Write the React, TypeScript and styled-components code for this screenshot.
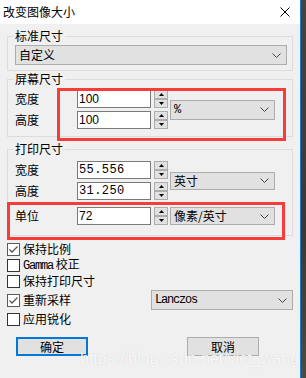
import React from "react";
import styled, { createGlobalStyle } from "styled-components";

const GlobalStyle = createGlobalStyle`
  html, body {
    margin: 0;
    padding: 0;
    width: 306px;
    height: 378px;
    overflow: hidden;
  }
  body {
    font-family: "Noto Sans CJK SC", "Liberation Sans", sans-serif;
    font-size: 12px;
    color: #000;
  }
  * { box-sizing: border-box; }
`;

const Screen = styled.div`
  display: flex;
  width: 306px;
  height: 378px;
  background: linear-gradient(180deg, #4b423e 0%, #3d3733 60%, #4e4a3c 100%);
`;

const Window = styled.div`
  position: relative;
  width: 301px;
  height: 378px;
  border-right: 1px solid #1a78cf;
  background: #f0f0f0;
  display: flex;
  flex-direction: column;
`;

const TitleBar = styled.div`
  height: 24px;
  flex: none;
  background: #fff;
  display: flex;
  align-items: center;
  justify-content: space-between;
  padding: 0 10px 0 3px;
  line-height: 14px;
`;

const Body = styled.div`
  padding: 5px 7px 0;
  display: flex;
  flex-direction: column;
`;

const Group = styled.fieldset<{ $mt: number; $pt: number; $pb: number }>`
  margin: ${(p) => p.$mt}px 0 0;
  padding: ${(p) => p.$pt}px 6px ${(p) => p.$pb}px 7px;
  border: 1px solid #dcdcdc;
  min-width: 0;
`;

const Legend = styled.legend`
  padding: 0 2px;
  margin-left: -2px;
  line-height: 14px;
  font-size: 12px;
`;

const FieldGrid = styled.div`
  display: grid;
  grid-template-columns: 60px 91px 105px;
  grid-auto-rows: 18px;
  column-gap: 2px;
  row-gap: 3px;
  align-items: center;
`;

const UnitGrid = styled(FieldGrid)`
  margin-top: 7px;
`;

const Label = styled.span`
  line-height: 14px;
`;

const NumberField = styled.div`
  display: flex;
  gap: 3px;
  height: 18px;
`;

const TextBox = styled.div<{ $mono?: boolean }>`
  width: 74px;
  height: 18px;
  border: 1px solid #7a7a7a;
  background: #fff;
  padding-left: 1px;
  font-family: ${(p) =>
    p.$mono ? '"Liberation Mono", monospace' : '"Liberation Sans", sans-serif'};
  letter-spacing: ${(p) => (p.$mono ? "0.4px" : "0")};
  font-size: 12px;
  line-height: 16px;
`;

const Spinner = styled.div`
  width: 14px;
  height: 18px;
  display: flex;
  flex-direction: column;
`;

const SpinButton = styled.div`
  flex: 1;
  border: 1px solid #adadad;
  background: #e1e1e1;
  display: flex;
  align-items: center;
  justify-content: center;
  & + & { margin-top: -0px; }
`;

const Select = styled.div<{ $w: number; $h: number; $mono?: boolean }>`
  width: ${(p) => p.$w}px;
  height: ${(p) => p.$h}px;
  border: 1px solid #adadad;
  background: #e1e1e1;
  display: flex;
  align-items: center;
  justify-content: space-between;
  padding: 0 5px 0 3px;
  line-height: 14px;
  font-family: ${(p) =>
    p.$mono
      ? '"Liberation Mono", "Noto Sans CJK SC", monospace'
      : '"Noto Sans CJK SC", sans-serif'};
  letter-spacing: ${(p) => (p.$mono ? "-1.2px" : "0")};
`;

const SpanRows = styled.div`
  grid-column: 3;
  grid-row: 1 / 3;
  align-self: center;
`;

const CheckList = styled.div`
  margin-top: 5px;
  display: flex;
  flex-direction: column;
`;

const CheckRow = styled.div<{ $h?: number }>`
  height: ${(p) => p.$h ?? 16}px;
  display: flex;
  align-items: center;
  line-height: 14px;
`;

const Box = styled.div<{ $checked?: boolean }>`
  width: 13px;
  height: 13px;
  flex: none;
  border: 1px solid ${(p) => (p.$checked ? "#5a5a5a" : "#333")};
  background: #fff;
  margin-right: 3px;
  display: flex;
  align-items: center;
  justify-content: center;
`;

const Mono = styled.span`
  font-family: "Liberation Mono", monospace;
  letter-spacing: -1.2px;
`;

const Push = styled.div`
  margin-left: auto;
`;

const ButtonRow = styled.div`
  display: flex;
  margin-top: 10px;
  padding-left: 9px;
  gap: 99px;
`;

const Button = styled.div<{ $default?: boolean }>`
  width: 72px;
  height: 19px;
  background: #e1e1e1;
  border: ${(p) => (p.$default ? "2px solid #0078d7" : "1px solid #adadad")};
  display: flex;
  align-items: center;
  justify-content: center;
  line-height: 14px;
`;

const Annotation = styled.div<{ $x: number; $y: number; $w: number; $h: number }>`
  position: absolute;
  left: ${(p) => p.$x}px;
  top: ${(p) => p.$y}px;
  width: ${(p) => p.$w}px;
  height: ${(p) => p.$h}px;
  border: 3px solid #f83b3b;
  pointer-events: none;
`;

const Watermark = styled.div`
  position: absolute;
  left: 80px;
  top: 350px;
  font-family: "Liberation Sans", Arial, sans-serif;
  font-size: 16px;
  line-height: 18px;
  color: rgba(255, 255, 255, 0.92);
  text-shadow: 0 0 1px rgba(0, 0, 0, 0.18);
  white-space: nowrap;
`;

function Chevron() {
  return (
    <svg width="9" height="5" viewBox="0 0 9 5">
      <polyline points="0.5,0.5 4.5,4.5 8.5,0.5" fill="none" stroke="#444" strokeWidth="1" />
    </svg>
  );
}

function Arrow({ up }: { up?: boolean }) {
  return (
    <svg width="5" height="3" viewBox="0 0 5 3">
      <polygon points={up ? "0,3 5,3 2.5,0" : "0,0 5,0 2.5,3"} fill="#000" />
    </svg>
  );
}

function Field({ value, mono }: { value: string; mono?: boolean }) {
  return (
    <NumberField>
      <TextBox $mono={mono}>{value}</TextBox>
      <Spinner>
        <SpinButton>
          <Arrow up />
        </SpinButton>
        <SpinButton>
          <Arrow />
        </SpinButton>
      </Spinner>
    </NumberField>
  );
}

function Check({ checked, children, h }: { checked?: boolean; children: React.ReactNode; h?: number }) {
  return (
    <>
      <Box $checked={checked}>
        {checked && (
          <svg width="11" height="11" viewBox="0 0 11 11">
            <polyline points="1.5,5.5 4,8 9.5,2.5" fill="none" stroke="#555" strokeWidth="1.3" />
          </svg>
        )}
      </Box>
      <span>{children}</span>
    </>
  );
}

export default function App() {
  return (
    <>
      <GlobalStyle />
      <Screen>
        <Window>
          <TitleBar>
            <span>改变图像大小</span>
            <svg width="10" height="10" viewBox="0 0 10 10">
              <path d="M0.5 0.5 L9.5 9.5 M9.5 0.5 L0.5 9.5" stroke="#000" strokeWidth="1" />
            </svg>
          </TitleBar>
          <Body>
            <Group $mt={0} $pt={2} $pb={5}>
              <Legend>标准尺寸</Legend>
              <Select $w={272} $h={20}>
                <span>自定义</span>
                <Chevron />
              </Select>
            </Group>

            <Group $mt={1} $pt={4} $pb={7}>
              <Legend>屏幕尺寸</Legend>
              <FieldGrid>
                <Label>宽度</Label>
                <Field value="100" />
                <SpanRows>
                  <Select $w={105} $h={20} $mono>
                    <span>%</span>
                    <Chevron />
                  </Select>
                </SpanRows>
                <Label>高度</Label>
                <Field value="100" />
              </FieldGrid>
            </Group>

            <Group $mt={5} $pt={5} $pb={10}>
              <Legend>打印尺寸</Legend>
              <FieldGrid>
                <Label>宽度</Label>
                <Field value="55.556" mono />
                <SpanRows>
                  <Select $w={105} $h={18}>
                    <span>英寸</span>
                    <Chevron />
                  </Select>
                </SpanRows>
                <Label>高度</Label>
                <Field value="31.250" mono />
              </FieldGrid>
              <UnitGrid>
                <Label>单位</Label>
                <Field value="72" />
                <Select $w={105} $h={18}>
                  <span>像素/英寸</span>
                  <Chevron />
                </Select>
              </UnitGrid>
            </Group>

            <CheckList>
              <CheckRow>
                <Check checked>保持比例</Check>
              </CheckRow>
              <CheckRow>
                <Check>
                  <Mono>Gamma</Mono> 校正
                </Check>
              </CheckRow>
              <CheckRow>
                <Check>保持打印尺寸</Check>
              </CheckRow>
              <CheckRow $h={22}>
                <Check checked>重新采样</Check>
                <Push>
                  <Select $w={142} $h={20} $mono>
                    <span>Lanczos</span>
                    <Chevron />
                  </Select>
                </Push>
              </CheckRow>
              <CheckRow>
                <Check>应用锐化</Check>
              </CheckRow>
            </CheckList>

            <ButtonRow>
              <Button $default>确定</Button>
              <Button>取消</Button>
            </ButtonRow>
          </Body>

          <Annotation $x={57} $y={88} $w={229} $h={53} />
          <Annotation $x={7} $y={202} $w={278} $h={38} />
          <Watermark>https://blog.csdn.net/vict_wang</Watermark>
        </Window>
      </Screen>
    </>
  );
}
